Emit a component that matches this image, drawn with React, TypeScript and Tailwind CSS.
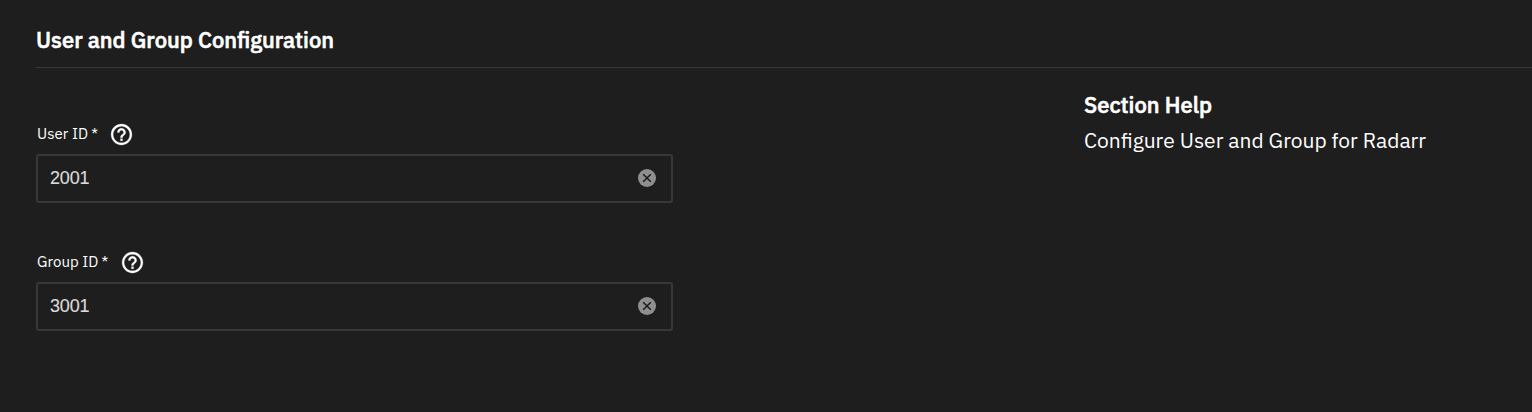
import React from "react";

function HelpIcon() {
  return (
    <svg viewBox="0 0 24 24" className="h-[25px] w-[25px] shrink-0 fill-white stroke-white stroke-[0.25]">
      <path d="M11 18h2v-2h-2v2zm1-16C6.48 2 2 6.48 2 12s4.48 10 10 10 10-4.48 10-10S17.52 2 12 2zm0 18c-4.41 0-8-3.59-8-8s3.59-8 8-8 8 3.59 8 8-3.59 8-8 8zm0-14c-2.21 0-4 1.79-4 4h2c0-1.1.9-2 2-2s2 .9 2 2c0 2-3 1.75-3 5h2c0-2.25 3-2.5 3-5 0-2.21-1.79-4-4-4z" />
    </svg>
  );
}

function ClearIcon() {
  return (
    <svg viewBox="0 0 18 18" className="h-[18px] w-[18px] shrink-0">
      <circle cx="9" cy="9" r="9" className="fill-[#8f8f8f]" />
      <path d="M5.2 5.2l7.6 7.6M12.8 5.2l-7.6 7.6" className="stroke-[#1e1e1e] stroke-[1.6]" />
    </svg>
  );
}

type FieldProps = { id: string; label: string; value: string; labelClass: string };

function Field({ id, label, value, labelClass }: FieldProps) {
  return (
    <div className="w-[637px]">
      <div className="flex h-[42px] items-center pl-px pt-[2px]">
        <label htmlFor={id} className={`flex shrink-0 whitespace-nowrap text-[15px] leading-5 tracking-[0.05px] ${labelClass}`}>
          {label}
          <span className="ml-[3px]">*</span>
        </label>
        <HelpIcon />
      </div>
      <div className="flex h-[49px] items-center rounded-[3px] border-2 border-[#383838] pb-px pl-3 pr-[15px]">
        <input
          id={id}
          defaultValue={value}
          className="min-w-0 flex-1 bg-transparent font-['Liberation_Sans',sans-serif] text-[18px] tracking-[-0.15px] text-[#d9d9d9] outline-none [-webkit-text-stroke:0.15px_#d9d9d9]"
        />
        <ClearIcon />
      </div>
    </div>
  );
}

export default function App() {
  return (
    <main className="flex h-[412px] flex-col overflow-hidden bg-[#1e1e1e] pl-9 font-['IBM_Plex_Sans','Roboto',sans-serif] text-white">
      <h2 className="h-[68px] shrink-0 border-b border-[#383838] pt-[25px] text-[22px] font-medium leading-[30px] [-webkit-text-stroke:0.6px_white]">
        User and Group Configuration
      </h2>
      <div className="flex">
        <div className="flex w-[1048px] shrink-0 flex-col gap-[37px] pt-[44px]">
          <Field id="user" label="User ID" value="2001" labelClass="w-[72px]" />
          <Field id="group" label="Group ID" value="3001" labelClass="w-[82.5px]" />
        </div>
        <aside className="pt-[22px]">
          <h3 className="text-[22px] font-medium leading-[30px] [-webkit-text-stroke:0.6px_white]">Section Help</h3>
          <p className="mt-[5px] whitespace-nowrap text-[21px] leading-[30px]">Configure User and Group for Radarr</p>
        </aside>
      </div>
    </main>
  );
}
